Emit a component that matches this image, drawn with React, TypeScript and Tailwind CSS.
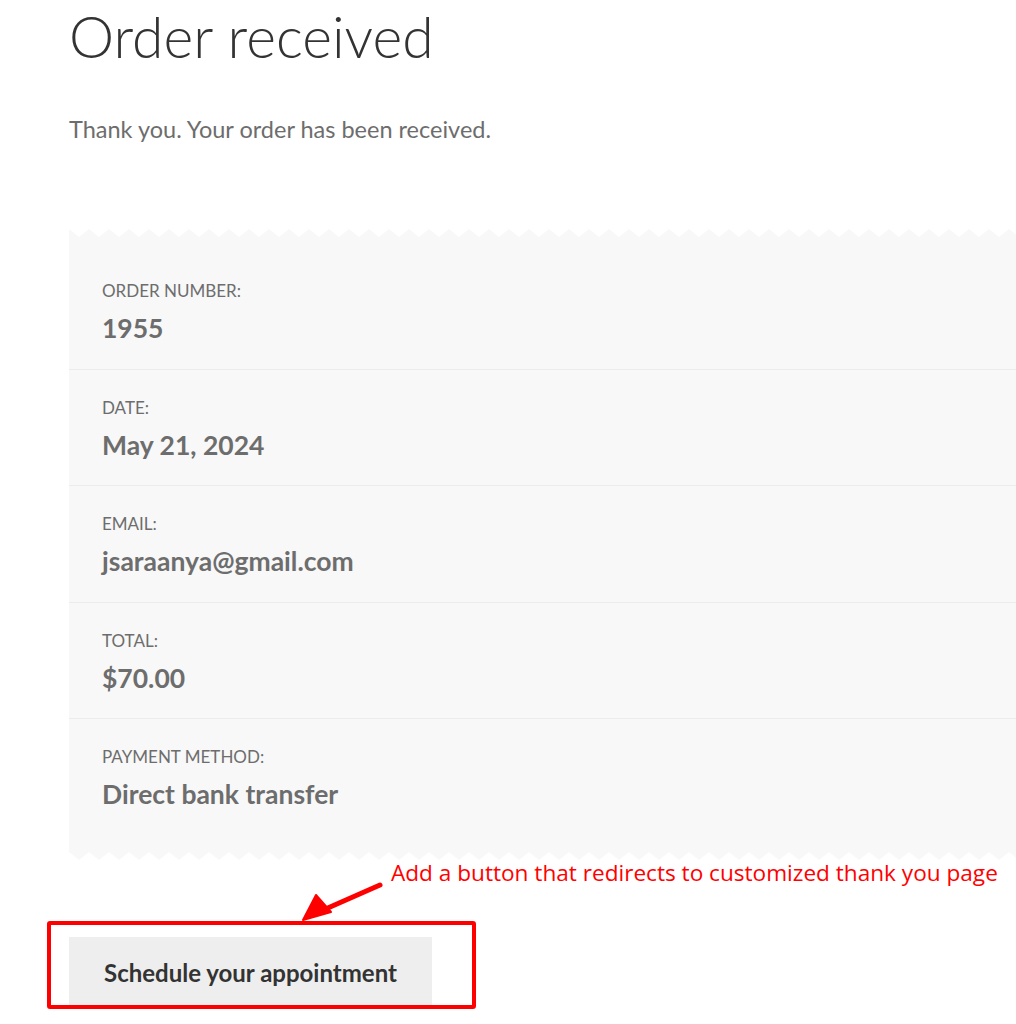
import React from "react";

const rows = [
  { label: "Order number:", value: "1955" },
  { label: "Date:", value: "May 21, 2024" },
  { label: "Email:", value: "jsaraanya@gmail.com" },
  { label: "Total:", value: "$70.00" },
  { label: "Payment method:", value: "Direct bank transfer" },
];

function Zigzag({ flip }: { flip?: boolean }) {
  const id = flip ? "zz-bottom" : "zz-top";
  return (
    <svg className="block w-full h-2" preserveAspectRatio="none">
      <defs>
        <pattern id={id} width="20" height="8" patternUnits="userSpaceOnUse">
          {flip ? (
            <path d="M0 0 L20 0 L10 8 Z" fill="#f8f8f8" />
          ) : (
            <path d="M0 0 L10 8 L20 0 L20 8 L0 8 Z" fill="#f8f8f8" />
          )}
        </pattern>
      </defs>
      <rect width="100%" height="8" fill={`url(#${id})`} />
    </svg>
  );
}

export default function App() {
  return (
    <div className="relative min-h-[1024px] bg-white pl-[69px] font-['Lato',sans-serif] overflow-hidden">
      <h1 className="pt-[4px] text-[57px] font-light leading-[64px] text-[#333]">Order received</h1>

      <p className="mt-[45px] text-[23.5px] leading-[32px] text-[#6d6d6d]">
        Thank you. Your order has been received.
      </p>

      {/* order details */}
      <div className="mt-[84px]">
        <Zigzag />
        <ul className="bg-[#f8f8f8] py-4">
          {rows.map((row, i) => (
            <li
              key={row.label}
              className={`px-[33px] pt-[26px] h-[116.5px] ${
                i < rows.length - 1 ? "border-b border-[#ececec]" : ""
              }`}
            >
              <div className="text-[17px] leading-[24px] uppercase text-[#6d6d6d]">{row.label}</div>
              <div className="mt-[9px] text-[26.5px] font-bold leading-[32px] text-[#6d6d6d]">
                {row.value}
              </div>
            </li>
          ))}
        </ul>
        <Zigzag flip />
      </div>

      {/* annotation */}
      <div className="relative h-[77px]">
        <p className="absolute left-[322px] top-[-2px] text-[22.6px] leading-[30px] text-[#ff0000] font-['Open_Sans',sans-serif] whitespace-nowrap">
          Add a button that redirects to customized thank you page
        </p>
        <svg className="absolute left-[220px] top-[10px]" width="120" height="60">
          <line x1="91" y1="15" x2="32" y2="41" stroke="#ff0000" strokeWidth="5" strokeLinecap="round" />
          <path d="M14 50 L27 25 L42 42 Z" fill="#ff0000" stroke="#ff0000" strokeWidth="2" strokeLinejoin="round" />
        </svg>
      </div>

      <div className="relative">
        <button className="h-[72px] w-[363px] bg-[#eeeeee] text-[24px] font-bold text-[#333]">
          Schedule your appointment
        </button>
        <div className="absolute left-[-22px] top-[-16px] h-[88px] w-[429px] rounded-[3px] border-4 border-[#ff0000]" />
      </div>
    </div>
  );
}
